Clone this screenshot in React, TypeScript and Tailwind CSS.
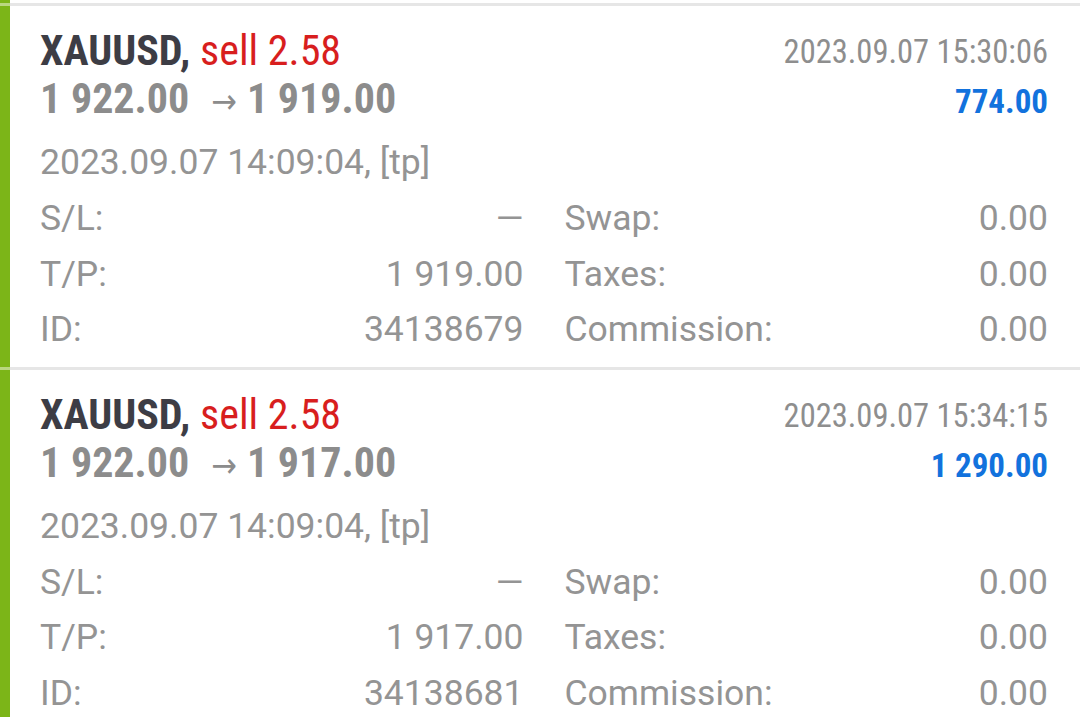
const deals = [
  {
    symbol: "XAUUSD",
    side: "sell 2.58",
    open: "1 922.00",
    close: "1 919.00",
    closeTime: "2023.09.07 15:30:06",
    profit: "774.00",
    openTime: "2023.09.07 14:09:04, [tp]",
    sl: "—",
    tp: "1 919.00",
    id: "34138679",
  },
  {
    symbol: "XAUUSD",
    side: "sell 2.58",
    open: "1 922.00",
    close: "1 917.00",
    closeTime: "2023.09.07 15:34:15",
    profit: "1 290.00",
    openTime: "2023.09.07 14:09:04, [tp]",
    sl: "—",
    tp: "1 917.00",
    id: "34138681",
  },
];

const condensed =
  "font-['Roboto_Condensed','Liberation_Sans_Narrow','DejaVu_Sans_Condensed',Roboto,sans-serif]";

const Row = ({ label, value }: { label: string; value: string }) => (
  <div className="flex justify-between h-[55.5px] leading-[55.5px]">
    <span>{label}</span>
    <span>{value}</span>
  </div>
);

const DealCard = ({ deal }: { deal: (typeof deals)[number] }) => (
  <div className="flex">
    <div className="w-[10px] bg-[#7cb518] shrink-0" />
    <div className="flex-1 pl-[30px] pr-[32px] pt-[21px] pb-[9px]">
      <div className={`flex justify-between ${condensed}`}>
        <div>
          <div className="text-[42px] leading-[48px] font-bold text-[#3d3d45]">
            {deal.symbol},{" "}
            <span className="font-normal text-[#d81e1e]">{deal.side}</span>
          </div>
          <div className="text-[42px] leading-[48px] font-bold text-[#8c8c8c]">
            {deal.open}
            <span className="font-normal text-[34px] ml-[22px] mr-[10px]">→</span>
            {deal.close}
          </div>
        </div>
        <div className="text-right pt-[1px]">
          <div className="text-[32.5px] leading-[48px] text-[#8e8e8e]">
            {deal.closeTime}
          </div>
          <div className="mt-[2px] text-[33px] leading-[48px] font-bold text-[#1272dd]">
            {deal.profit}
          </div>
        </div>
      </div>

      <div className="font-['Roboto',sans-serif] text-[#949494]">
        <div className="mt-[16px] text-[35.5px] leading-[40px]">
          {deal.openTime}
        </div>
        <div className="mt-[9px] grid grid-cols-2 gap-x-[41px] text-[35.5px]">
          <div>
            <Row label="S/L:" value={deal.sl} />
            <Row label="T/P:" value={deal.tp} />
            <Row label="ID:" value={deal.id} />
          </div>
          <div>
            <Row label="Swap:" value="0.00" />
            <Row label="Taxes:" value="0.00" />
            <Row label="Commission:" value="0.00" />
          </div>
        </div>
      </div>
    </div>
  </div>
);

const Separator = () => (
  <div className="flex h-[3px]">
    <div className="w-[10px] bg-[#b9d780]" />
    <div className="flex-1 bg-[#e6e6e6]" />
  </div>
);

export default function App() {
  return (
    <div className="w-[1080px] h-[717px] overflow-hidden bg-white">
      <div className="flex h-[3px]">
        <div className="w-[10px] bg-[#7cb518]" />
      </div>
      {deals.map((deal) => (
        <div key={deal.id}>
          <Separator />
          <DealCard deal={deal} />
        </div>
      ))}
    </div>
  );
}
